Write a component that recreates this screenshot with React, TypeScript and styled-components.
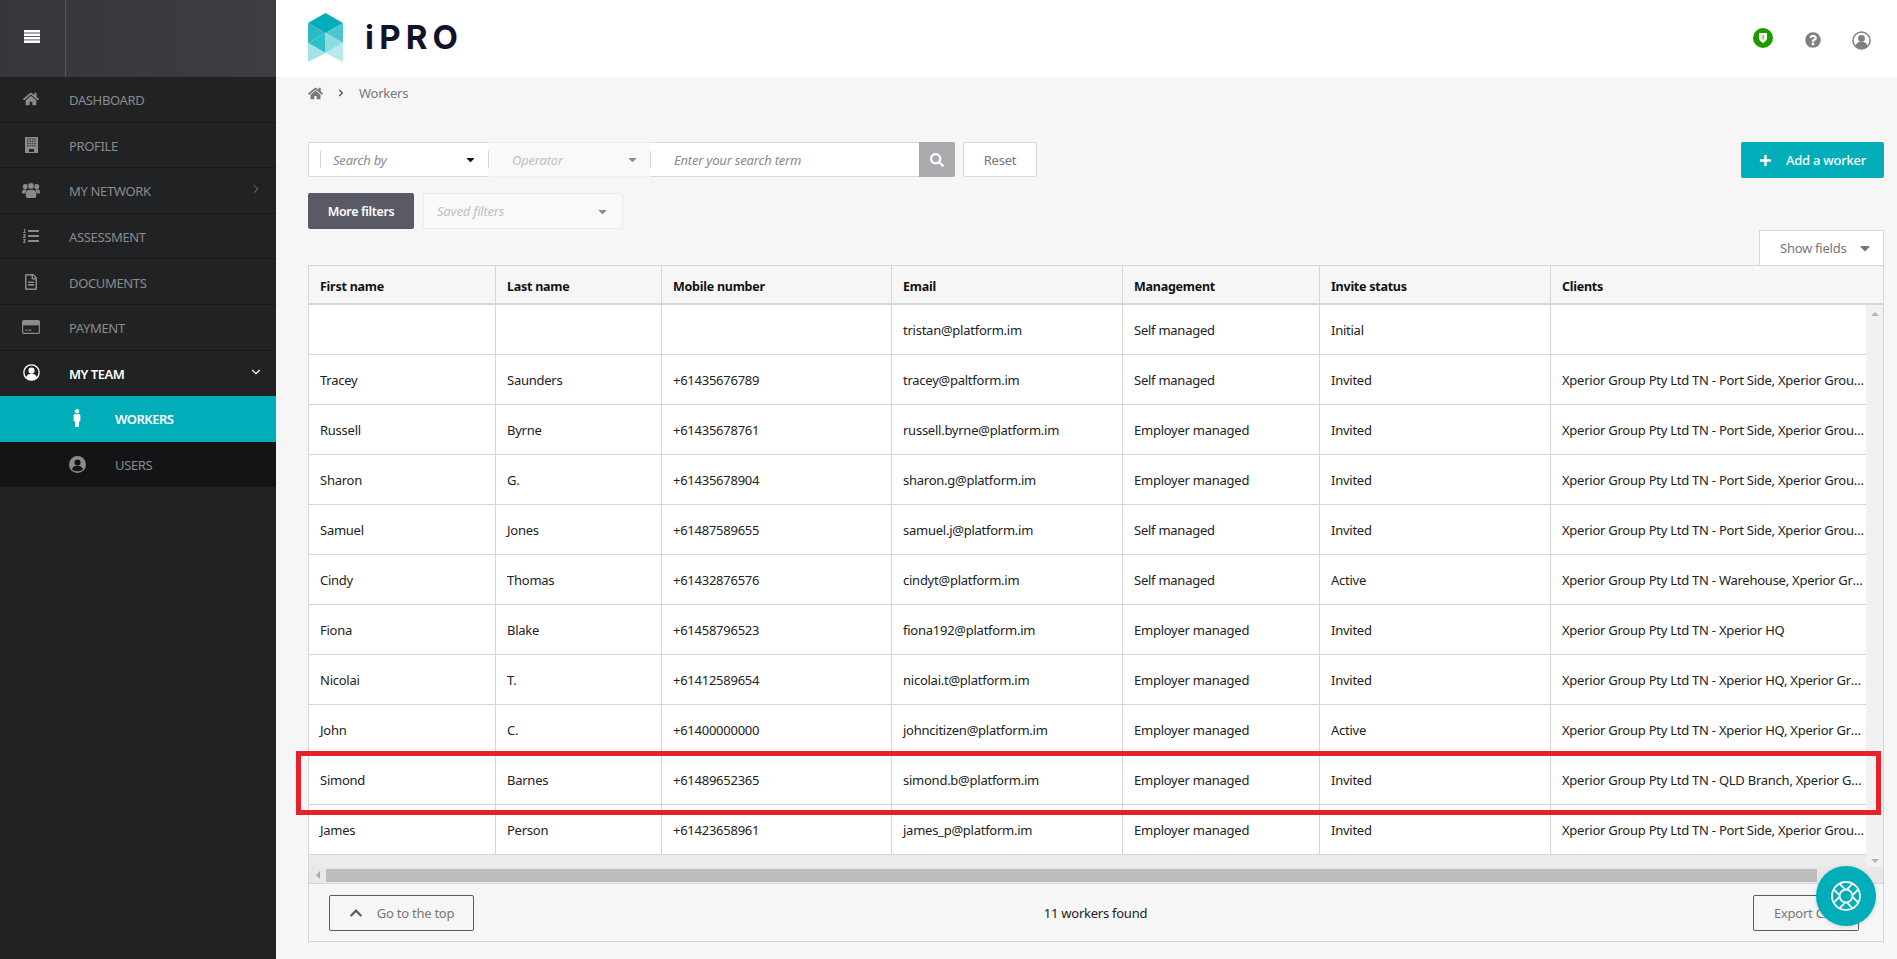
import React from "react";
import styled, { createGlobalStyle } from "styled-components";
import {
  FaHome, FaListOl, FaRegFileAlt, FaMale,
  FaSearch, FaPlus, FaChevronUp, FaQuestionCircle,
  FaCaretDown, FaChevronRight,
} from "react-icons/fa";
import { ChevronRight, ChevronDown } from "lucide-react";

const BODY = `"Noto Sans", "Open Sans", sans-serif`;

const Global = createGlobalStyle`
  html, body { margin: 0; padding: 0; height: 959px; overflow: hidden; background: #f6f6f6; }
  body { font-family: ${BODY}; font-size: 13px; letter-spacing: -0.25px; color: #222; }
  * { box-sizing: border-box; }
`;

const Page = styled.div`display: flex; width: 1897px; height: 959px;`;

/* Sidebar */
const Sidebar = styled.aside`width: 276px; flex: none; background: #212224; display: flex; flex-direction: column;`;
const SideTop = styled.div`height: 77px; display: flex; background: linear-gradient(90deg, #36373b, #3d3e43);`;
const Burger = styled.div`width: 66px; display: flex; align-items: center; justify-content: center; border-right: 1px solid #55565a; padding: 0 2px 4px 0;`;
const NavRow = styled.div<{ $active?: boolean; $sub?: boolean; $open?: boolean; $current?: boolean }>`
  height: 45.6px; display: flex; align-items: center; position: relative; flex: none;
  padding-left: ${p => (p.$sub ? 115 : 69)}px; padding-top: 2px;
  font-size: 13px; letter-spacing: ${p => (p.$active || p.$current ? -0.5 : -0.35)}px; text-transform: uppercase;
  color: ${p => (p.$active || p.$current ? "#fff" : "#8a8b8f")};
  font-weight: ${p => (p.$active || p.$current ? 600 : 400)};
  background: ${p => (p.$current ? "#00adb9" : p.$sub ? "#141416" : "transparent")};
  border-bottom: 1px solid ${p => (p.$sub || p.$open ? "transparent" : "#18191b")};
`;
const NavIcon = styled.span<{ $sub?: boolean }>`
  position: absolute; left: ${p => (p.$sub ? 62 : 16)}px; width: 30px; top: 0; bottom: 0;
  display: flex; align-items: center; justify-content: center; font-size: 16px;
`;
const NavCaret = styled.span`position: absolute; left: 247px; width: 18px; top: 0; bottom: 2px; display: flex; align-items: center; justify-content: center;`;

/* Main */
const Main = styled.main`flex: 1; min-width: 0; display: flex; flex-direction: column;`;
const Header = styled.header`height: 77px; flex: none; background: #fff; display: flex; align-items: center; justify-content: space-between; padding: 0 26px 0 32px;`;
const Brand = styled.div`display: flex; align-items: center; gap: 22px; margin-top: -3px;`;
const BrandName = styled.span`font-family: Inter, "Liberation Sans", sans-serif; font-weight: 700; font-size: 33px; letter-spacing: 5.2px; color: #12122a; line-height: 1;`;
const HeaderIcons = styled.div`display: flex; align-items: center; gap: 31px; margin-top: 3px; color: #808080;`;
const Shield = styled.span`width: 20px; height: 20px; border-radius: 50%; background: #1d9a00; display: flex; align-items: center; justify-content: center; margin: -4px 1px 0 -1px;`;

const Content = styled.div`flex: 1; min-height: 0; padding: 0 13px 0 32px; display: flex; flex-direction: column;`;
const Crumbs = styled.div`height: 32px; display: flex; align-items: center; gap: 14px; color: #777; font-size: 13px; margin-bottom: 33px;`;
const CrumbSep = styled.span`display: flex; color: #444; font-size: 8px;`;
const ToolRow = styled.div`display: flex; justify-content: space-between; align-items: flex-start;`;
const SearchGroup = styled.div`display: flex; align-items: stretch; height: 35px;`;
const Select = styled.div<{ $w: number; $off?: boolean; $pad: number }>`
  width: ${p => p.$w}px; height: 100%; display: flex; align-items: center; justify-content: space-between;
  padding: 0 11px 0 ${p => p.$pad}px; position: relative;
  background: ${p => (p.$off ? "#f9f9f9" : "#fff")};
  border: 1px solid ${p => (p.$off ? "#eee" : "#d9d9d9")};
  border-left-color: ${p => (p.$off ? "transparent" : "#d9d9d9")};
  border-right: none;
  border-radius: ${p => (p.$off ? "0" : "2px 0 0 2px")};
`;
const Tick = styled.span<{ $left: number }>`position: absolute; left: ${p => p.$left}px; top: 8px; bottom: 8px; width: 1px; background: #d5d5d5;`;
const Hint = styled.span<{ $faint?: boolean }>`font-style: italic; font-size: 13px; letter-spacing: -0.2px; color: ${p => (p.$faint ? "#c0c0c0" : "#8b8b8b")};`;
const Caret = styled.span<{ $c: string; $big?: boolean }>`display: flex; font-size: ${p => (p.$big ? 16 : 13)}px; color: ${p => p.$c};`;
const TermBox = styled.div`width: 269px; height: 100%; background: #fff; border: 1px solid #d9d9d9; border-left: none; border-right: none; display: flex; align-items: center; padding-left: 24px; position: relative;`;
const SearchBtn = styled.div`width: 36px; background: #a9a9ae; color: #fff; display: flex; align-items: center; justify-content: center; font-size: 14px; border-radius: 0 2px 2px 0;`;
const OutlineBtn = styled.div`width: 74px; margin-left: 8px; background: #fff; border: 1px solid #d9d9d9; border-radius: 2px; display: flex; align-items: center; justify-content: center; color: #777;`;
const AddBtn = styled.div`width: 143px; height: 36px; background: #00adb9; color: #fff; border-radius: 2px; display: flex; align-items: center; justify-content: center; gap: 14px; font-size: 13px; font-weight: 500;`;
const FilterRow = styled.div`display: flex; gap: 9px; margin-top: 15px; height: 36px;`;
const MoreBtn = styled.div`width: 106px; background: #595a66; color: #fff; border-radius: 2px; display: flex; align-items: center; justify-content: center; font-weight: 600; font-size: 12.5px; letter-spacing: -0.35px;`;
const SavedSelect = styled.div`width: 200px; background: #f9f9f9; border: 1px solid #ececec; border-radius: 2px; display: flex; align-items: center; justify-content: space-between; padding: 0 13px;`;
const FieldsRow = styled.div`display: flex; justify-content: flex-end; margin-top: 1px;`;
const FieldsBtn = styled.div`width: 125px; height: 36px; margin-bottom: -1px; background: #fff; border: 1px solid #d9d9d9; border-bottom: none; display: flex; align-items: center; justify-content: space-between; padding: 0 10px 2px 20px; color: #777;`;

/* Table */
const Card = styled.section`position: relative; height: 677px; border: 1px solid #d6d6d9; display: flex; flex-direction: column; background: #f6f6f6;`;
const Table = styled.table`width: 100%; table-layout: fixed; border-collapse: separate; border-spacing: 0;`;
const Col = styled.col<{ $w?: number }>`${p => (p.$w ? `width: ${p.$w}px;` : "")}`;
const Th = styled.th`height: 39px; padding: 3px 11px 0; text-align: left; font-weight: 700; font-size: 12.5px; color: #111; border-right: 1px solid #d6d6d9; border-bottom: 2px solid #d6d6d9; &:last-child { border-right: none; }`;
const BodyWrap = styled.div`height: 562px; display: flex; flex: none; background: #ebebeb;`;
const BodyScroll = styled.div`flex: 1; min-width: 0; overflow: hidden;`;
const Td = styled.td`
  height: 50px; padding: 0 11px; color: #222; background: #fff;
  border-right: 1px solid #d6d6d9; border-bottom: 1px solid #d6d6d9;
  white-space: nowrap; overflow: hidden; text-overflow: ellipsis;
  &:last-child { border-right: none; padding-right: 0; }
`;
const VBar = styled.div`width: 17px; flex: none; background: #f1f1f1; display: flex; flex-direction: column; justify-content: space-between; align-items: center; padding: 7px 0 4px; color: #b5b5b5;`;
const Arrow = styled.span<{ $dir: "up" | "down" | "left" }>`
  width: 0; height: 0; display: block;
  ${p => p.$dir === "left"
    ? "border-top: 4px solid transparent; border-bottom: 4px solid transparent; border-right: 4px solid #aaa;"
    : `border-left: 4.5px solid transparent; border-right: 4.5px solid transparent; border-${p.$dir === "up" ? "bottom" : "top"}: 4.5px solid #b5b5b5;`}
`;
const HBar = styled.div`height: 17px; flex: none; background: #e8e8e8; display: flex; align-items: center; padding-right: 66px; border-bottom: 1px solid #d6d6d9;`;
const HArrow = styled.span`width: 17px; display: flex; justify-content: center;`;
const HThumb = styled.div`flex: 1; height: 13px; background: #bdbdbd;`;
const TableFoot = styled.div`flex: 1; display: grid; grid-template-columns: 1fr auto 1fr; align-items: center; padding: 0 24px 0 20px;`;
const FootBtn = styled.div<{ $end?: boolean }>`
  height: 36px; width: ${p => (p.$end ? 106 : 145)}px; justify-self: ${p => (p.$end ? "end" : "start")};
  border: 1px solid #595a66; border-radius: 2px; color: #777;
  display: flex; align-items: center; justify-content: center; gap: 14px; white-space: nowrap; overflow: hidden;
`;
const FootIcon = styled.span`display: flex; color: #595a66; font-size: 14px;`;
const Count = styled.span`font-size: 13px; color: #222; margin-left: 3px;`;
const Highlight = styled.div`position: absolute; left: -13px; top: 485px; width: 1585px; height: 64px; border: 5px solid #e8202a; pointer-events: none;`;
const HelpBubble = styled.div`position: fixed; left: 1816px; top: 866px; width: 60px; height: 60px; border-radius: 50%; background: #00adb9; display: flex; align-items: center; justify-content: center; box-shadow: 0 1px 4px rgba(0,0,0,.15);`;

const Bars = () => (
  <svg width="16" height="13" viewBox="0 0 16 13" fill="#fff">
    <rect y="0" width="16" height="2.6" /><rect y="3.45" width="16" height="2.6" />
    <rect y="6.9" width="16" height="2.6" /><rect y="10.35" width="16" height="2.6" />
  </svg>
);

const Logo = () => (
  <svg width="35" height="49" viewBox="0 0 35 49">
    <polygon points="17.5,0 35,10 17.5,20 0,10" fill="#00adb9" />
    <polygon points="0,10 17.5,20 0,30" fill="#2cb9c4" />
    <polygon points="35,10 17.5,20 35,30" fill="#4fc6cf" />
    <polygon points="17.5,20 0,30 17.5,40" fill="#2fbfc9" />
    <polygon points="17.5,20 35,30 17.5,40" fill="#8bdbe1" />
    <polygon points="0,30 17.5,40 0,49" fill="#a3e2e7" />
    <polygon points="35,30 17.5,40 35,49" fill="#b6e9ec" />
  </svg>
);

const Ring = ({ size, c, bg }: { size: number; c: string; bg: string }) => (
  <svg width={size} height={size} viewBox="0 0 20 20">
    <circle cx="10" cy="10" r="9" fill={bg} stroke={c} strokeWidth="1.6" />
    <circle cx="10" cy="7.8" r="3.6" fill={c} />
    <path d="M3.6 16c.6-3.2 3-4.6 6.4-4.6s5.8 1.4 6.4 4.6A8.8 8.8 0 0 1 10 19a8.8 8.8 0 0 1-6.4-3z" fill={c} />
  </svg>
);

const UserDisc = () => (
  <svg width="17" height="17" viewBox="0 0 20 20">
    <circle cx="10" cy="10" r="10" fill="#8a8b8f" />
    <circle cx="10" cy="7.6" r="3.6" fill="#141416" />
    <path d="M3.6 16c.6-3.2 3-4.4 6.4-4.4s5.8 1.2 6.4 4.4A8 8 0 0 1 10 18a8 8 0 0 1-6.4-2z" fill="#141416" />
  </svg>
);

const ShieldGlyph = () => (
  <svg width="8" height="10" viewBox="0 0 9 11">
    <path d="M0 0h9v5.5C9 8 6.8 10 4.5 11 2.2 10 0 8 0 5.5z" fill="#fff" />
    <path d="M3 2h3v3.6C6 6.8 5.2 7.6 4.5 8 3.8 7.6 3 6.8 3 5.6z" fill="#b9d36a" />
  </svg>
);

const Tower = () => (
  <svg width="13" height="16" viewBox="0 0 13 16">
    <rect width="13" height="16" fill="#8a8b8f" />
    {[2, 4.4, 6.8, 9.2].map(x =>
      [1.5, 3.7, 5.9, 8.1].map(y => <rect key={`${x}-${y}`} x={x} y={y} width="1.5" height="1.3" fill="#3a3b3e" />)
    )}
    <rect x="4" y="12" width="5" height="3" fill="#26272a" />
  </svg>
);

const Team = () => (
  <svg width="18" height="16" viewBox="0 0 18 16" fill="#8a8b8f">
    <circle cx="3.4" cy="4.6" r="2.6" /><circle cx="14.6" cy="4.6" r="2.6" />
    <path d="M0 10.2C0 8 1.4 7.6 3 7.6c.8 0 1.3.2 1.6.5-1 1-1.2 2.2-1.2 3.4H1.2C.5 11.5 0 11 0 10.2zM18 10.2C18 8 16.6 7.6 15 7.6c-.8 0-1.3.2-1.6.5 1 1 1.2 2.2 1.2 3.4h2.2c.7 0 1.2-.5 1.2-1.3z" />
    <circle cx="9" cy="4" r="3.4" stroke="#212224" strokeWidth=".8" />
    <path d="M3.8 14.2v-3C3.8 9 5.4 8 7 8h4c1.6 0 3.2 1 3.2 3.2v3c0 1-.8 1.8-1.8 1.8H5.6c-1 0-1.8-.8-1.8-1.8z" />
  </svg>
);

const Card2 = () => (
  <svg width="18" height="14" viewBox="0 0 18 14" fill="none">
    <rect x=".6" y=".6" width="16.8" height="12.8" rx="1.2" stroke="#8a8b8f" strokeWidth="1.2" />
    <rect x="1" y="1" width="16" height="4.4" fill="#8a8b8f" />
    <rect x="3" y="9.6" width="2.6" height="1.1" fill="#8a8b8f" /><rect x="6.4" y="9.6" width="3" height="1.1" fill="#8a8b8f" />
  </svg>
);

const Buoy = () => (
  <svg width="30" height="30" viewBox="-15 -15 30 30" fill="none" stroke="#fff" strokeWidth="1.8">
    <circle r="14" />
    <circle r="6.4" />
    {[45, 135, 225, 315].map(a => (
      <g key={a} transform={`rotate(${a})`}>
        <line x1="-4" y1="-4.9" x2="-4" y2="-13.4" />
        <line x1="4" y1="-4.9" x2="4" y2="-13.4" />
      </g>
    ))}
  </svg>
);

const nav = [
  { label: "Dashboard", icon: <FaHome /> },
  { label: "Profile", icon: <Tower /> },
  { label: "My Network", icon: <Team />, caret: <ChevronRight size={14} strokeWidth={1.5} /> },
  { label: "Assessment", icon: <FaListOl /> },
  { label: "Documents", icon: <FaRegFileAlt /> },
  { label: "Payment", icon: <Card2 /> },
];

const cols = [187, 166, 230, 231, 197, 231];
const heads = ["First name", "Last name", "Mobile number", "Email", "Management", "Invite status", "Clients"];
const PS = "Xperior Group Pty Ltd TN - Port Side, Xperior Group Pty Ltd TN - Warehouse";
const rows: string[][] = [
  ["", "", "", "tristan@platform.im", "Self managed", "Initial", ""],
  ["Tracey", "Saunders", "+61435676789", "tracey@paltform.im", "Self managed", "Invited", PS],
  ["Russell", "Byrne", "+61435678761", "russell.byrne@platform.im", "Employer managed", "Invited", PS],
  ["Sharon", "G.", "+61435678904", "sharon.g@platform.im", "Employer managed", "Invited", PS],
  ["Samuel", "Jones", "+61487589655", "samuel.j@platform.im", "Self managed", "Invited", PS],
  ["Cindy", "Thomas", "+61432876576", "cindyt@platform.im", "Self managed", "Active", "Xperior Group Pty Ltd TN - Warehouse, Xperior Group Pty Ltd TN - Port Side"],
  ["Fiona", "Blake", "+61458796523", "fiona192@platform.im", "Employer managed", "Invited", "Xperior Group Pty Ltd TN - Xperior HQ"],
  ["Nicolai", "T.", "+61412589654", "nicolai.t@platform.im", "Employer managed", "Invited", "Xperior Group Pty Ltd TN - Xperior HQ, Xperior Group Pty Ltd TN"],
  ["John", "C.", "+61400000000", "johncitizen@platform.im", "Employer managed", "Active", "Xperior Group Pty Ltd TN - Xperior HQ, Xperior Group Pty Ltd TN"],
  ["Simond", "Barnes", "+61489652365", "simond.b@platform.im", "Employer managed", "Invited", "Xperior Group Pty Ltd TN - QLD Branch, Xperior Group Pty Ltd TN"],
  ["James", "Person", "+61423658961", "james_p@platform.im", "Employer managed", "Invited", PS],
];

const ColSet = () => (
  <colgroup>
    {cols.map((w, i) => <Col key={i} $w={w} />)}
    <Col />
  </colgroup>
);

export default function App() {
  return (
    <Page>
      <Global />
      <Sidebar>
        <SideTop><Burger><Bars /></Burger></SideTop>
        {nav.map(n => (
          <NavRow key={n.label}>
            <NavIcon>{n.icon}</NavIcon>
            {n.label}
            {n.caret && <NavCaret>{n.caret}</NavCaret>}
          </NavRow>
        ))}
        <NavRow $active $open>
          <NavIcon><Ring size={17} c="#fff" bg="#212224" /></NavIcon>
          My Team
          <NavCaret><ChevronDown size={14} strokeWidth={2} /></NavCaret>
        </NavRow>
        <NavRow $sub $current><NavIcon $sub><FaMale size={18} /></NavIcon>Workers</NavRow>
        <NavRow $sub><NavIcon $sub><UserDisc /></NavIcon>Users</NavRow>
      </Sidebar>
      <Main>
        <Header>
          <Brand><Logo /><BrandName>iPRO</BrandName></Brand>
          <HeaderIcons>
            <Shield><ShieldGlyph /></Shield>
            <FaQuestionCircle size={16} />
            <Ring size={19} c="#808080" bg="#fff" />
          </HeaderIcons>
        </Header>
        <Content>
          <Crumbs>
            <FaHome size={15} color="#777" />
            <CrumbSep><FaChevronRight /></CrumbSep>
            Workers
          </Crumbs>
          <ToolRow>
            <SearchGroup>
              <Select $w={180} $pad={24}><Tick $left={11} /><Hint>Search by</Hint><Caret $c="#111"><FaCaretDown /></Caret></Select>
              <Select $w={162} $off $pad={23}><Tick $left={-1} /><Hint $faint>Operator</Hint><Caret $c="#8b8b8b"><FaCaretDown /></Caret></Select>
              <TermBox><Tick $left={0} /><Hint>Enter your search term</Hint></TermBox>
              <SearchBtn><FaSearch /></SearchBtn>
              <OutlineBtn>Reset</OutlineBtn>
            </SearchGroup>
            <AddBtn><FaPlus size={13} />Add a worker</AddBtn>
          </ToolRow>
          <FilterRow>
            <MoreBtn>More filters</MoreBtn>
            <SavedSelect><Hint $faint>Saved filters</Hint><Caret $c="#8b8b8b"><FaCaretDown /></Caret></SavedSelect>
          </FilterRow>
          <FieldsRow>
            <FieldsBtn>Show fields<Caret $c="#777" $big><FaCaretDown /></Caret></FieldsBtn>
          </FieldsRow>
          <Card>
            <Table>
              <ColSet />
              <thead><tr>{heads.map(h => <Th key={h}>{h}</Th>)}</tr></thead>
            </Table>
            <BodyWrap>
              <BodyScroll>
                <Table>
                  <ColSet />
                  <tbody>
                    {rows.map((r, i) => (
                      <tr key={i}>{r.map((c, j) => <Td key={j}>{c}</Td>)}</tr>
                    ))}
                  </tbody>
                </Table>
              </BodyScroll>
              <VBar><Arrow $dir="up" /><Arrow $dir="down" /></VBar>
            </BodyWrap>
            <HBar><HArrow><Arrow $dir="left" /></HArrow><HThumb /></HBar>
            <TableFoot>
              <FootBtn><FootIcon><FaChevronUp /></FootIcon>Go to the top</FootBtn>
              <Count>11 workers found</Count>
              <FootBtn $end>Export CSV</FootBtn>
            </TableFoot>
            <Highlight />
          </Card>
        </Content>
      </Main>
      <HelpBubble><Buoy /></HelpBubble>
    </Page>
  );
}
